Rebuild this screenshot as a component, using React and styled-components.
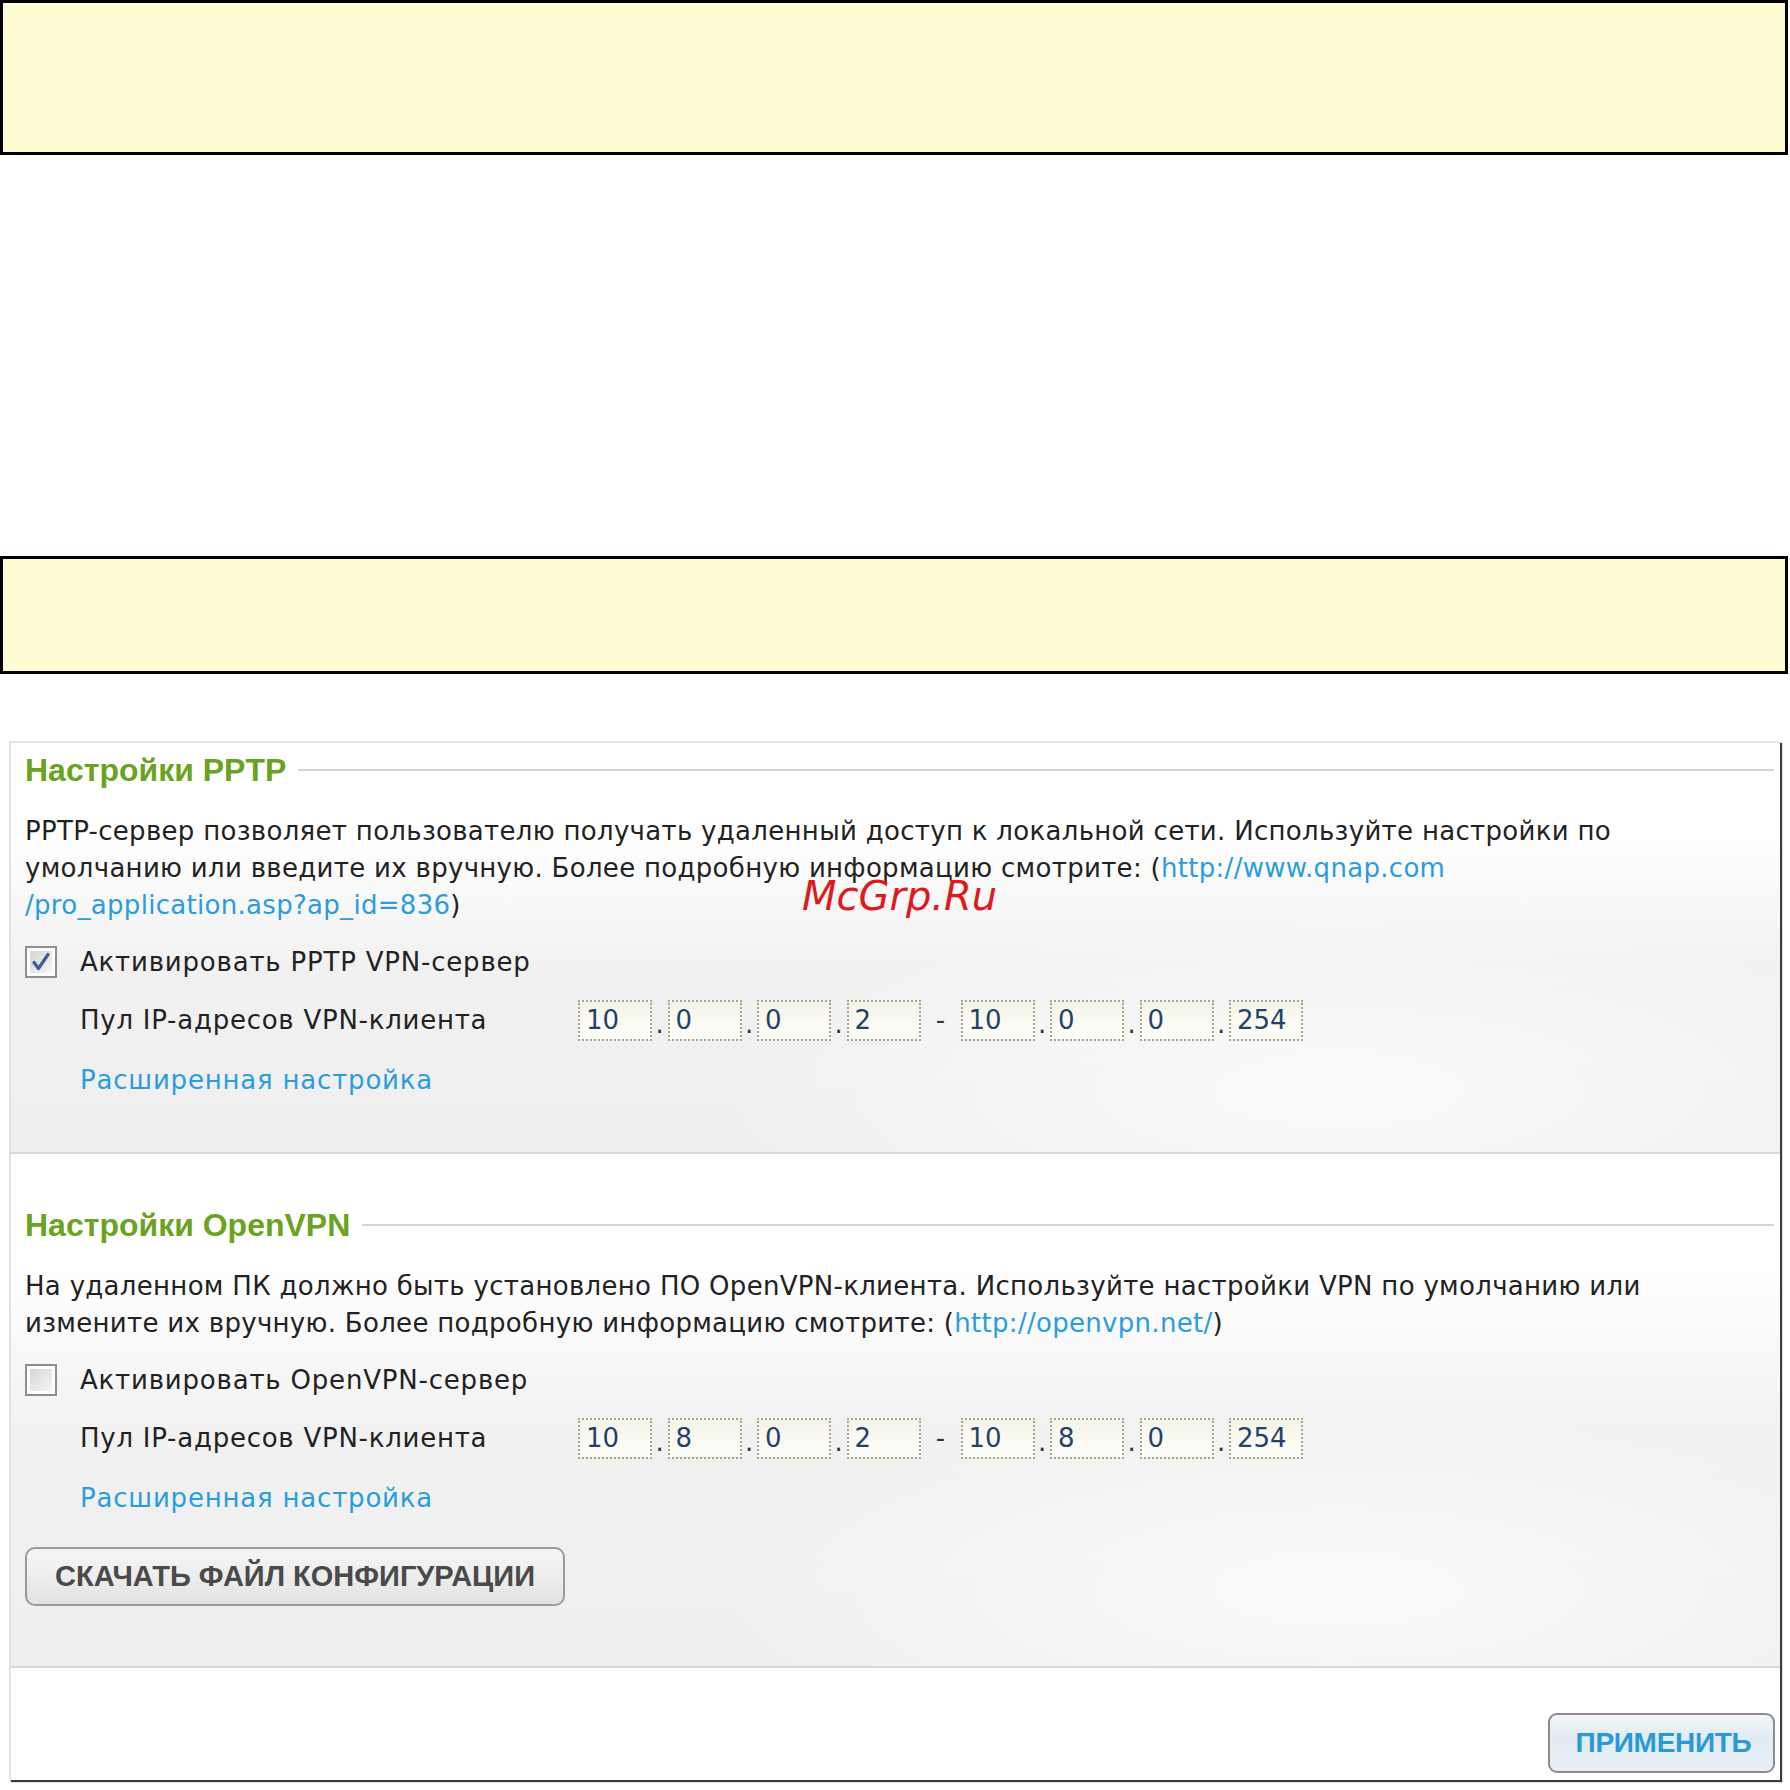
import React from "react";
import styled, { createGlobalStyle } from "styled-components";

const GlobalStyle = createGlobalStyle`
  html, body {
    margin: 0;
    padding: 0;
    background: #ffffff;
  }
  body {
    font-family: "DejaVu Sans", Verdana, sans-serif;
    color: #222222;
  }
`;

const sections = [
  {
    id: "pptp",
    title: "Настройки PPTP",
    lines: [
      [{ text: "PPTP-сервер позволяет пользователю получать удаленный доступ к локальной сети. Используйте настройки по" }],
      [
        { text: "умолчанию или введите их вручную. Более подробную информацию смотрите: (" },
        { text: "http://www.qnap.com", link: true },
      ],
      [{ text: "/pro_application.asp?ap_id=836", link: true }, { text: ")" }],
    ],
    enableLabel: "Активировать PPTP VPN-сервер",
    checked: true,
    from: ["10", "0", "0", "2"],
    to: ["10", "0", "0", "254"],
  },
  {
    id: "openvpn",
    title: "Настройки OpenVPN",
    lines: [
      [{ text: "На удаленном ПК должно быть установлено ПО OpenVPN-клиента. Используйте настройки VPN по умолчанию или" }],
      [
        { text: "измените их вручную. Более подробную информацию смотрите: (" },
        { text: "http://openvpn.net/", link: true },
        { text: ")" },
      ],
    ],
    enableLabel: "Активировать OpenVPN-сервер",
    checked: false,
    from: ["10", "8", "0", "2"],
    to: ["10", "8", "0", "254"],
    download: true,
  },
];

const Checkbox = ({ checked }) => (
  <svg width="32" height="32" viewBox="0 0 32 32">
    <defs>
      <linearGradient id={checked ? "cbOn" : "cbOff"} x1="0" y1="0" x2="1" y2="1">
        <stop offset="0" stopColor="#d4d4d4" />
        <stop offset="1" stopColor="#f6f6f6" />
      </linearGradient>
    </defs>
    <rect x="1" y="1" width="30" height="30" fill="#fdfdfd" stroke="#8e8e8e" strokeWidth="2" />
    <rect x="5" y="5" width="22" height="22" fill={`url(#${checked ? "cbOn" : "cbOff"})`} />
    {checked && (
      <path
        d="M9 16.5 L13.5 22.5 L23 8.5"
        fill="none"
        stroke="#3d5d9e"
        strokeWidth="3.2"
        strokeLinecap="round"
        strokeLinejoin="round"
      />
    )}
  </svg>
);

const IpGroup = ({ parts }) => (
  <>
    {parts.map((p, i) => (
      <React.Fragment key={i}>
        {i > 0 && <Dot>.</Dot>}
        <Octet readOnly value={p} />
      </React.Fragment>
    ))}
  </>
);

const SettingsSection = ({ s }) => (
  <Section $pt={s.download ? 53 : 9} $pb={s.download ? 60 : 54}>
    <Legend>
      <LegendText>{s.title}</LegendText>
      <LegendRule />
    </Legend>
    <Paragraph>
      {s.lines.map((line, i) => (
        <Line key={i}>
          {line.map((chunk, j) =>
            chunk.link ? <TextLink key={j}>{chunk.text}</TextLink> : <span key={j}>{chunk.text}</span>
          )}
        </Line>
      ))}
    </Paragraph>
    <CheckRow>
      <Checkbox checked={s.checked} />
      <span>{s.enableLabel}</span>
    </CheckRow>
    <PoolRow>
      <PoolLabel>Пул IP-адресов VPN-клиента</PoolLabel>
      <IpGroup parts={s.from} />
      <Dash>-</Dash>
      <IpGroup parts={s.to} />
    </PoolRow>
    <Advanced>Расширенная настройка</Advanced>
    {s.download && <DownloadButton>СКАЧАТЬ ФАЙЛ КОНФИГУРАЦИИ</DownloadButton>}
  </Section>
);

const App = () => {
  return (
    <Page>
      <GlobalStyle />
      <Notice $h={155} />
      <Notice $h={118} $mt={401} />
      <Panel>
        {sections.map((s) => (
          <SettingsSection key={s.id} s={s} />
        ))}
        <Footer>
          <ApplyButton>ПРИМЕНИТЬ</ApplyButton>
        </Footer>
      </Panel>
      <Watermark>McGrp.Ru</Watermark>
    </Page>
  );
};

const Page = styled.div`
  position: relative;
  width: 1790px;
  height: 1790px;
  overflow: hidden;
`;

const Notice = styled.div`
  box-sizing: border-box;
  width: 1788px;
  height: ${(p) => p.$h}px;
  margin-top: ${(p) => p.$mt || 0}px;
  background: #fffcd3;
  border: 3px solid #000000;
`;

const Panel = styled.div`
  box-sizing: border-box;
  margin: 67px 0 0 9px;
  width: 1771px;
  height: 1039px;
  border-top: 2px solid #e6e6e6;
  border-left: 2px solid #e2e2e2;
  background: #ffffff;
  box-shadow: 2px 2px 1px #3c3c3c;
  display: flex;
  flex-direction: column;
`;

const Section = styled.div`
  padding: ${(p) => p.$pt}px 6px ${(p) => p.$pb}px 14px;
  border-bottom: 2px solid #d8d8d8;
  background:
    radial-gradient(ellipse 900px 260px at 75% 85%, rgba(255, 255, 255, 0.7), rgba(255, 255, 255, 0) 70%),
    linear-gradient(180deg, #ffffff 0%, #ffffff 22%, #f1f1f1 55%, #efefef 100%);
`;

const Legend = styled.div`
  display: flex;
  align-items: center;
  height: 36px;
`;

const LegendText = styled.span`
  font-family: "Liberation Sans", Arial, sans-serif;
  font-size: 32px;
  font-weight: bold;
  color: #6aa321;
  white-space: nowrap;
`;

const LegendRule = styled.div`
  flex: 1;
  height: 2px;
  margin-left: 12px;
  background: #d3d3d3;
`;

const Paragraph = styled.div`
  margin-top: 25px;
  font-size: 26px;
  letter-spacing: 0.3px;
  line-height: 37px;
  color: #222222;
`;

const Line = styled.div`
  white-space: nowrap;
`;

const TextLink = styled.span`
  color: #2b9cdc;
`;

const CheckRow = styled.div`
  display: flex;
  align-items: center;
  gap: 23px;
  height: 40px;
  margin-top: 18px;
  font-size: 26px;
  letter-spacing: 0.8px;
  color: #222222;
`;

const PoolRow = styled.div`
  display: flex;
  align-items: center;
  height: 42px;
  margin-top: 17px;
  padding-left: 55px;
  font-size: 26px;
`;

const PoolLabel = styled.span`
  width: 498px;
  letter-spacing: 0.75px;
  color: #222222;
  white-space: nowrap;
`;

const Octet = styled.input`
  box-sizing: border-box;
  width: 74px;
  height: 41px;
  padding: 0 0 0 6px;
  border: 2px dotted #a9a58c;
  background: linear-gradient(180deg, #f3f3e6 0%, #fbfbf4 60%, #fdfdf9 100%);
  font-family: "DejaVu Sans", Verdana, sans-serif;
  font-size: 26px;
  color: #23426a;
  outline: none;
`;

const Dot = styled.span`
  width: 15.5px;
  align-self: flex-end;
  line-height: 34px;
  text-align: center;
  color: #333333;
`;

const Dash = styled.span`
  width: 40px;
  text-align: center;
  color: #333333;
`;

const Advanced = styled.div`
  margin-top: 21px;
  padding-left: 55px;
  font-size: 26px;
  letter-spacing: 0.8px;
  line-height: 36px;
  color: #2b9cdc;
`;

const DownloadButton = styled.button`
  box-sizing: border-box;
  display: block;
  width: 540px;
  height: 59px;
  margin-top: 31px;
  border: 2px solid #9a9a9a;
  border-radius: 10px;
  background: linear-gradient(180deg, #f5f5f5 0%, #ececec 55%, #e2e2e2 100%);
  font-family: "Liberation Sans", Arial, sans-serif;
  font-weight: bold;
  font-size: 29px;
  color: #4a4a4a;
  text-align: center;
  padding: 0;
`;

const Footer = styled.div`
  flex: 1;
  display: flex;
  justify-content: flex-end;
  align-items: flex-end;
  padding: 0 5px 7px 0;
  background: #ffffff;
`;

const ApplyButton = styled.button`
  box-sizing: border-box;
  width: 227px;
  height: 60px;
  border: 2px solid #8c8c8c;
  border-radius: 9px;
  background: linear-gradient(180deg, #f3f7fa 0%, #dfeaf1 45%, #e9f1f6 100%);
  font-family: "Liberation Sans", Arial, sans-serif;
  font-weight: bold;
  font-size: 28px;
  letter-spacing: -0.3px;
  color: #2a9ad6;
  padding: 0 0 0 4px;
`;

const Watermark = styled.div`
  position: absolute;
  left: 802px;
  top: 872px;
  font-family: "DejaVu Sans", Verdana, sans-serif;
  font-style: oblique;
  font-size: 40px;
  line-height: 48px;
  color: #df1a1f;
  pointer-events: none;
`;

export default App;
